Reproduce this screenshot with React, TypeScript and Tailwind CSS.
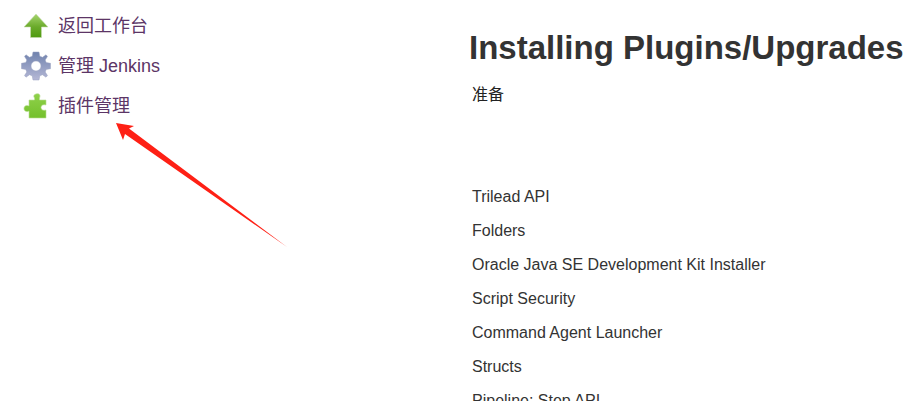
import React from 'react';

const UpIcon = () => (
  <svg width="26" height="26" viewBox="0 0 26 26" className="shrink-0">
    <defs>
      <linearGradient id="up" x1="0" y1="0" x2="0" y2="1">
        <stop offset="0" stopColor="#a6d56e" />
        <stop offset="0.55" stopColor="#6aaa2a" />
        <stop offset="1" stopColor="#4f9a10" />
      </linearGradient>
    </defs>
    <path d="M13 1 L25 14 L18.500 14 L18.500 24.500 L7.500 24.500 L7.500 14 L1 14 Z" fill="url(#up)" stroke="#c9dcb4" strokeWidth="0.6" />
  </svg>
);

const GearIcon = () => (
  <svg width="30" height="30" viewBox="0 0 30 30" className="shrink-0">
    <defs>
      <linearGradient id="gear" x1="0" y1="0" x2="0" y2="1">
        <stop offset="0" stopColor="#6f82ad" />
        <stop offset="1" stopColor="#b5b8d6" />
      </linearGradient>
    </defs>
    <path
      fillRule="evenodd"
      fill="url(#gear)"
      stroke="#9aa3c0"
      strokeWidth="0.5"
      d="M12 1 L18 1 L18.800 5.200 L21.500 6.300 L25 3.800 L26.500 5.400 L24.200 9 L25.200 11.600 L29.500 12.300 L29.500 17.700 L25.200 18.400 L24.200 21 L26.500 24.600 L25 26.200 L21.500 23.700 L18.800 24.800 L18 29 L12 29 L11.200 24.800 L8.500 23.700 L5 26.200 L3.500 24.600 L5.800 21 L4.800 18.400 L0.500 17.700 L0.500 12.300 L4.800 11.600 L5.800 9 L3.500 5.400 L5 3.800 L8.500 6.300 L11.200 5.200 Z M15 10 A5 5 0 1 0 15 20 A5 5 0 1 0 15 10 Z"
    />
  </svg>
);

const PuzzleIcon = () => (
  <svg width="26" height="28" viewBox="0 0 26 28" className="shrink-0">
    <defs>
      <linearGradient id="puzzle" x1="0" y1="0" x2="0" y2="1">
        <stop offset="0" stopColor="#8fd14a" />
        <stop offset="1" stopColor="#74c02c" />
      </linearGradient>
    </defs>
    <path
      fill="url(#puzzle)"
      stroke="#b9dd92"
      strokeWidth="0.6"
      d="M13 2 C16 1 18 3 16.500 6 L16.500 8 L23 8 L23 13 C20 12 18 13.500 18 15.500 C18 17.500 20 19 23 18 L23 26 L6 26 L6 19 C3.500 20.500 1 19 1 16.500 C1 14 3.500 12.500 6 14 L6 8 L11.500 8 L11.500 6 C10 4 11 2.500 13 2 Z"
    />
  </svg>
);

const navItems = [
  { label: '返回工作台', icon: <UpIcon />, slot: 'pl-[23px]' },
  { label: '管理 Jenkins', icon: <GearIcon />, slot: 'pl-[21px]' },
  { label: '插件管理', icon: <PuzzleIcon />, slot: 'pl-[23px]' },
];

const plugins = [
  'Trilead API',
  'Folders',
  'Oracle Java SE Development Kit Installer',
  'Script Security',
  'Command Agent Launcher',
  'Structs',
  'Pipeline: Step API',
];

export default function App() {
  return (
    <div className="relative flex h-[401px] w-[915px] overflow-hidden bg-white font-['Liberation_Sans','Noto_Sans_CJK_SC',sans-serif] text-[#333]">
      <aside className="flex w-[469px] shrink-0 flex-col gap-[10px] pt-[11px]">
        {navItems.map((item) => (
          <a key={item.label} className="flex h-[30px] items-center text-[18px] text-[#5c3566]">
            <span className={`flex w-[58px] shrink-0 items-center ${item.slot}`}>{item.icon}</span>
            <span>{item.label}</span>
          </a>
        ))}
      </aside>

      <main className="flex-1">
        <h1 className="mt-[28px] whitespace-nowrap text-[33px] leading-[40px] font-bold">Installing Plugins/Upgrades</h1>
        <p className="mt-[17px] pl-[3px] text-[16px] leading-[20px] text-[#222]">准备</p>
        <ul className="mt-[82px] flex flex-col gap-[14px] pl-[3px] text-[16px] leading-[20px]">
          {plugins.map((name) => (
            <li key={name}>{name}</li>
          ))}
        </ul>
      </main>

      {/* annotation arrow drawn over the screenshot */}
      <svg width="915" height="401" viewBox="0 0 915 401" className="pointer-events-none absolute top-0 left-0">
        <path d="M116 123 L134 126 L129 128.500 L287 247 L125 134 L123 140 Z" fill="#fe2015" />
      </svg>
    </div>
  );
}
